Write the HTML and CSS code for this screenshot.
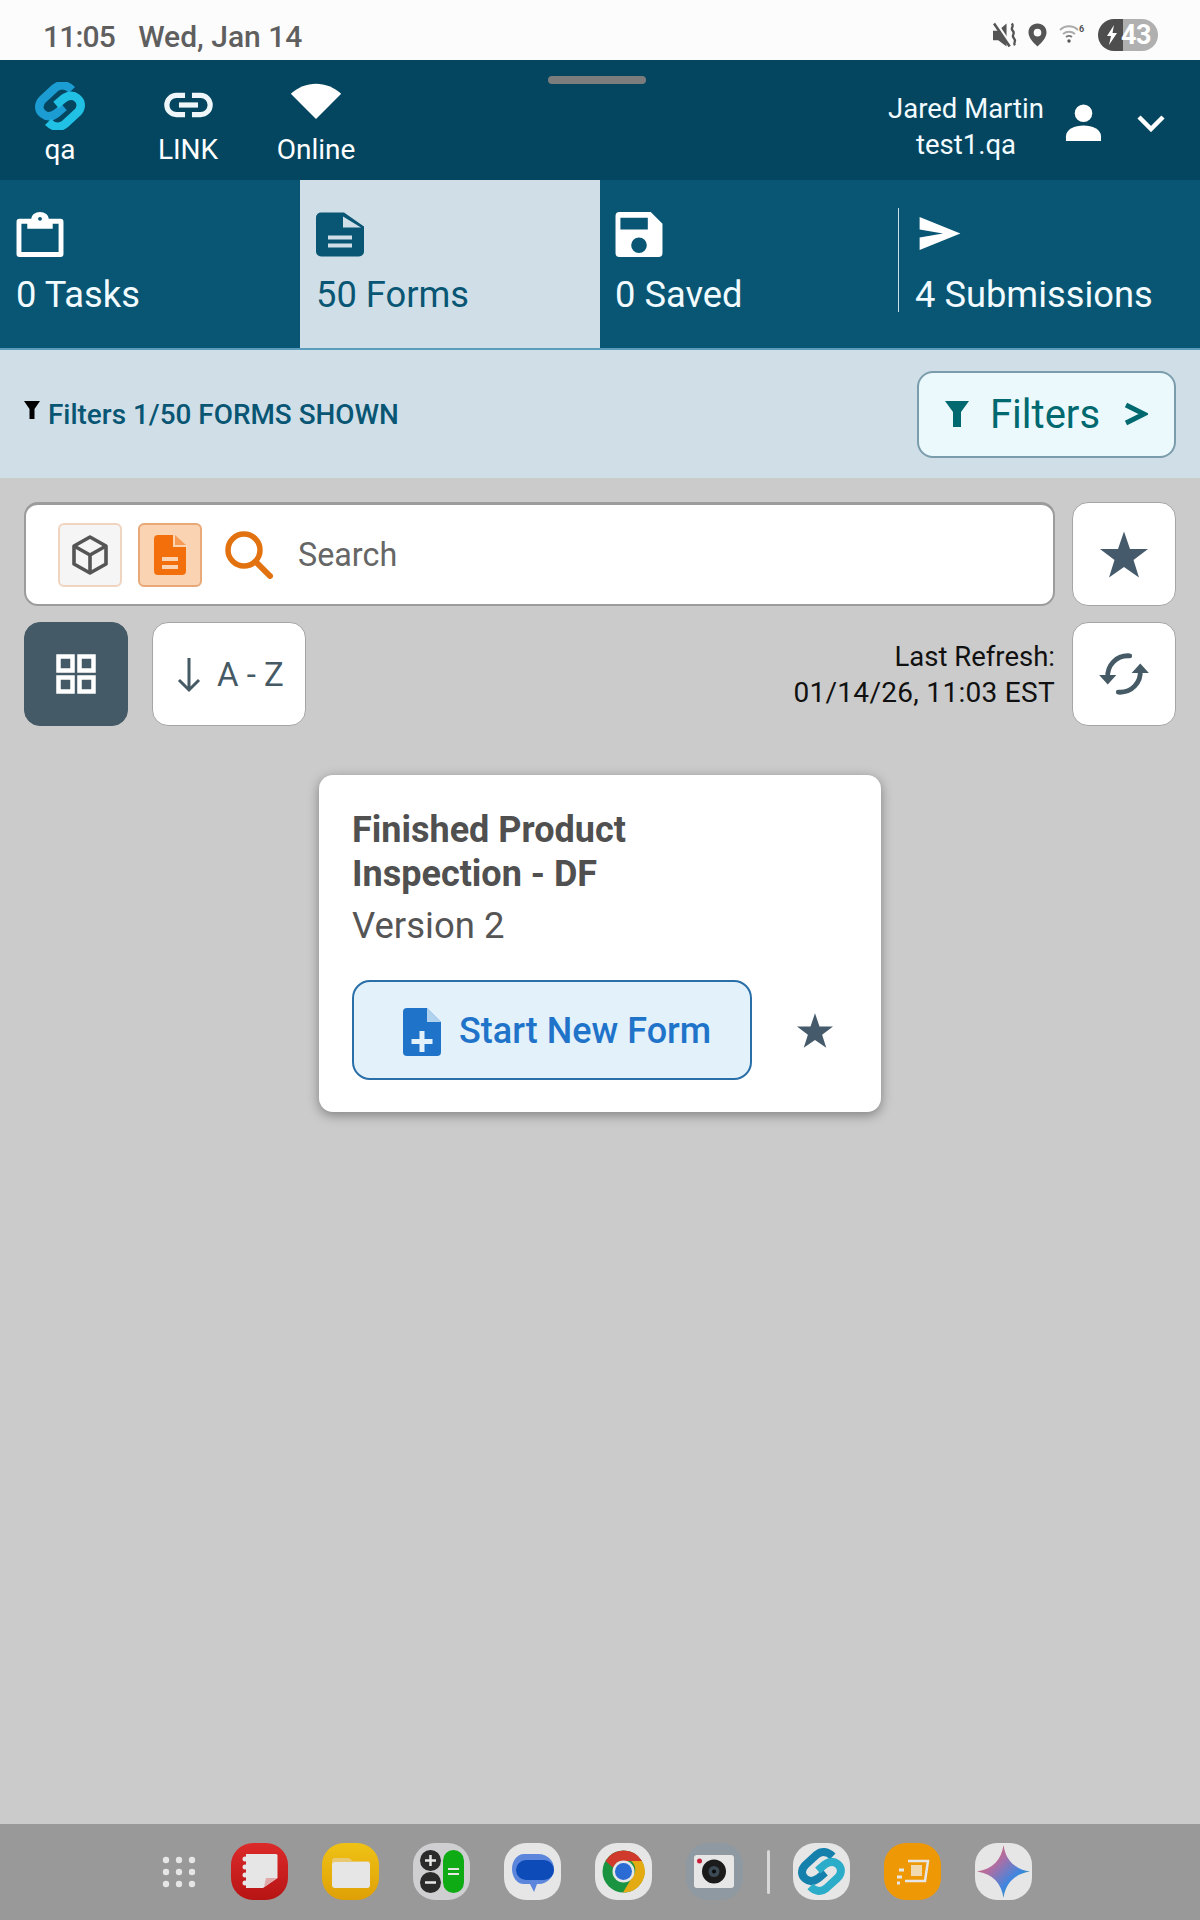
FILE: index.html
```html
<!DOCTYPE html>
<html lang="en">
<head>
<meta charset="utf-8">
<title>Forms</title>
<link rel="stylesheet" href="styles.css">
</head>
<body>
<div class="page">
  <div class="status">
    <div class="status-text"><span class="clock">11:05</span><span>Wed, Jan 14</span></div>
    <div class="status-icons">
      <svg class="si-mute" viewBox="0 0 24 24"><path fill="#555" d="M0 8h5l8-7v22l-8-6H0z"/><path stroke="#fcfcfc" stroke-width="2.500" d="M3 0l13 20"/><path stroke="#555" stroke-width="2.500" d="M1 1l15 22"/><path fill="none" stroke="#555" stroke-width="2.200" d="M18 1c3 3-2 4 1 7s-2 4 1 7-1 4 1 7"/></svg>
      <svg class="si-loc" viewBox="0 0 20 24"><path fill="#555" fill-rule="evenodd" d="M10 0c5.500 0 9.500 4 9.500 9.300 0 5-4.500 10.200-9.500 14.700C5 19.500.5 14.300.5 9.300.5 4 4.500 0 10 0zm0 5.500a4 4 0 1 0 0 8 4 4 0 0 0 0-8z"/></svg>
      <svg class="si-wifi" viewBox="0 0 27 20"><g fill="none" stroke="#aaa" stroke-width="1.800"><path d="M1 7c5-5 13-5 18 0"/><path d="M4 11c3.500-3 8.500-3 12 0"/></g><path fill="none" stroke="#777" stroke-width="1.800" d="M7 14c2-1.500 4-1.500 6 0"/><circle cx="10" cy="18" r="1.700" fill="#555"/><text x="20" y="9" class="si-six">6</text></svg>
      <div class="battery">
        <div class="bat-charge"><svg class="bat-bolt" viewBox="0 0 12 20"><path fill="#fff" d="M8 0L1 11h4l-2 9 8-12H6.500z"/></svg></div>
        <div class="bat-level">43</div>
      </div>
    </div>
  </div>

  <header class="topbar">
    <div class="handle"></div>
    <div class="top-left">
      <div class="top-item">
        <svg class="logo" viewBox="0 0 48 48"><g fill="none" stroke-width="8.500"><path stroke="#1b9dd3" d="M36 8C30 2 24 2 19 6L7 17C2 22 2 28 7 32c5 4 10 2 14-1l7-6"/><path stroke="#21c0e5" d="M12 40c6 6 12 6 17 2l12-11c5-5 5-11 0-15-5-4-10-2-14 1l-7 6"/></g></svg>
        <span>qa</span>
      </div>
      <div class="top-item">
        <svg class="link" viewBox="0 0 56 30"><g fill="none" stroke="#eef6fa" stroke-width="6"><path d="M24 4H14a11 11 0 0 0 0 22h10"/><path d="M32 4h10a11 11 0 0 1 0 22H32"/><path d="M17 15h22"/></g></svg>
        <span>LINK</span>
      </div>
      <div class="top-item">
        <svg class="wifi" viewBox="0 0 56 40"><path fill="#fff" d="M0 12C16-3 40-3 56 12L28 40z"/></svg>
        <span>Online</span>
      </div>
    </div>
    <div class="top-right">
      <div class="user"><span>Jared Martin</span><span>test1.qa</span></div>
      <svg class="person" viewBox="0 0 36 38"><circle cx="18" cy="9.500" r="9" fill="#fff"/><path fill="#fff" d="M0 38v-5c0-7 9-11 18-11s18 4 18 11v5z"/></svg>
      <svg class="chev" viewBox="0 0 28 18"><path fill="none" stroke="#fff" stroke-width="4.500" d="M2 3l12 12L26 3"/></svg>
    </div>
  </header>

  <nav class="tabs">
    <div class="tab">
      <svg class="tab-icon" viewBox="0 0 48 46"><path fill="#fff" fill-rule="evenodd" d="M3 7h12a9 7 0 0 1 18 0h12a3 3 0 0 1 3 3v33a3 3 0 0 1-3 3H3a3 3 0 0 1-3-3V10a3 3 0 0 1 3-3zm2 5v29h38V12h-6v5H11v-5zM24 5a2 2 0 1 0 0 4 2 2 0 0 0 0-4z"/></svg>
      <span>0 Tasks</span>
    </div>
    <div class="tab active">
      <svg class="tab-icon" viewBox="0 0 48 44"><path fill="#085674" d="M5 0h23l20 14v25a5 5 0 0 1-5 5H5a5 5 0 0 1-5-5V5a5 5 0 0 1 5-5z"/><path fill="#d0dfe7" d="M27 4l18 11H27zM12 23h24v4H12zM12 31h24v4H12z"/></svg>
      <span>50 Forms</span>
    </div>
    <div class="tab saved">
      <svg class="tab-icon" viewBox="0 0 48 46"><path fill="#fff" fill-rule="evenodd" d="M4 0h32l12 12v30a4 4 0 0 1-4 4H4a4 4 0 0 1-4-4V4a4 4 0 0 1 4-4zm1 6v12h28V6zm19 20a8 8 0 1 0 0 16 8 8 0 0 0 0-16z"/></svg>
      <span>0 Saved</span>
    </div>
    <div class="tab last">
      <svg class="tab-icon send" viewBox="0 0 42 34"><path fill="#fff" d="M0 0l42 17L0 34v-13l24-4-24-4z"/></svg>
      <span>4 Submissions</span>
    </div>
  </nav>

  <section class="filterbar">
    <div class="filter-note">
      <svg class="funnel-sm" viewBox="0 0 16 18"><path fill="#000" d="M0 0h16l-5.500 8v10h-5V8z"/></svg>
      <span>Filters 1/50 FORMS SHOWN</span>
    </div>
    <button class="filter-btn">
      <svg class="funnel" viewBox="0 0 24 26"><path fill="#00696f" d="M0 0h24l-8 11v15H8V11z"/></svg>
      <span>Filters</span>
      <svg class="gt" viewBox="0 0 24 24"><path fill="none" stroke="#00696f" stroke-width="5" d="M2 3l18 9L2 21"/></svg>
    </button>
  </section>

  <main class="content">
    <div class="row">
      <div class="search">
        <div class="mode mode-off">
          <svg class="cube" viewBox="0 0 36 40"><g fill="none" stroke="#555" stroke-width="3.600" stroke-linejoin="round"><path d="M18 2l16 9v18l-16 9-16-9V11z"/><path d="M2 11l16 9 16-9M18 20v18"/></g></svg>
        </div>
        <div class="mode mode-on">
          <svg class="doc" viewBox="0 0 32 40"><path fill="#f36f0b" d="M4 0h15v12h13v24a4 4 0 0 1-4 4H4a4 4 0 0 1-4-4V4a4 4 0 0 1 4-4z"/><path fill="#f36f0b" d="M21 0l11 10H21z" opacity=".55"/><path fill="#fbd3b2" d="M8 22h16v4H8zM8 30h16v4H8z"/></svg>
        </div>
        <svg class="mag" viewBox="0 0 48 48"><circle cx="19" cy="19" r="16" fill="none" stroke="#e2720f" stroke-width="5.500"/><path stroke="#e2720f" stroke-width="6" stroke-linecap="round" d="M31 31l14 14"/></svg>
        <span class="placeholder">Search</span>
      </div>
      <button class="square">
        <svg class="star-lg" viewBox="0 0 48 46"><path fill="#455a6b" d="M24 0l6 17.500h18L33.500 28.500 39 46 24 35.500 9 46l5.500-17.500L0 17.500h18z"/></svg>
      </button>
    </div>
    <div class="row">
      <button class="square grid-btn">
        <svg class="grid" viewBox="0 0 40 40"><g fill="none" stroke="#fff" stroke-width="4.500"><path d="M2.500 2.500h14v14h-14zM23.500 2.500h14v14h-14zM2.500 23.500h14v14h-14zM23.500 23.500h14v14h-14z"/></g></svg>
      </button>
      <button class="sort">
        <svg class="arrow" viewBox="0 0 24 36"><path fill="none" stroke="#455a64" stroke-width="3" d="M12 1v32M2 23l10 10 10-10"/></svg>
        <span>A - Z</span>
      </button>
      <div class="refresh-text"><span>Last Refresh:</span><span class="refresh-date">01/14/26, 11:03 EST</span></div>
      <button class="square">
        <svg class="sync" viewBox="0 0 52 46"><g fill="none" stroke="#455a64" stroke-width="5" stroke-linecap="round"><path d="M9 27C8 14 18 3 32 4"/><path d="M43 19c1 13-9 24-23 23"/></g><path fill="#455a64" d="M0 24h18l-9 10zM34 22h18l-9-10z"/></svg>
      </button>
    </div>

    <article class="card">
      <h2 class="card-title">Finished Product<br>Inspection - DF</h2>
      <p class="card-version">Version 2</p>
      <div class="card-actions">
        <button class="start">
          <svg class="doc-plus" viewBox="0 0 38 48"><path fill="#1f74ca" d="M4 0h20l14 14v30a4 4 0 0 1-4 4H4a4 4 0 0 1-4-4V4a4 4 0 0 1 4-4z"/><path fill="#e3f1fb" d="M24 0v14h14z" opacity=".75"/><path fill="#e3f1fb" d="M16.500 23h5v8h8v5h-8v8h-5v-8h-8v-5h8z"/></svg>
          <span>Start New Form</span>
        </button>
        <svg class="star-sm" viewBox="0 0 48 46"><path fill="#455a6b" d="M24 0l6 17.500h18L33.500 28.500 39 46 24 35.500 9 46l5.500-17.500L0 17.500h18z"/></svg>
      </div>
    </article>
  </main>

  <footer class="dock">
    <svg class="dock-grid" viewBox="0 0 36 32"><g fill="#e6e6e6"><circle cx="5" cy="4" r="3.200"/><circle cx="18" cy="4" r="3.200"/><circle cx="31" cy="4" r="3.200"/><circle cx="5" cy="16" r="3.200"/><circle cx="18" cy="16" r="3.200"/><circle cx="31" cy="16" r="3.200"/><circle cx="5" cy="28" r="3.200"/><circle cx="18" cy="28" r="3.200"/><circle cx="31" cy="28" r="3.200"/></g></svg>

    <div class="app app-notes"><svg class="app-svg" viewBox="0 0 57 57"><path fill="#e6e6e6" d="M15 11h30a1.500 1.500 0 0 1 1.500 1.500V35L32 45H15z"/><path fill="#e0a8a8" d="M33 44l2-9h11z"/><g fill="#e6e6e6"><circle cx="14" cy="16" r="2.500"/><circle cx="14" cy="24" r="2.500"/><circle cx="14" cy="32" r="2.500"/><circle cx="14" cy="40" r="2.500"/></g></svg></div>
    <div class="app app-files"><svg class="app-svg" viewBox="0 0 57 57"><path fill="#e8c870" d="M10 18a3 3 0 0 1 3-3h14l4 3h15a2 2 0 0 1 2 2v4H10z"/><rect x="10" y="19" width="38" height="26" rx="3" fill="#e6e6e6"/></svg></div>
    <div class="app app-calc"><svg class="app-svg" viewBox="0 0 57 57"><rect x="30" y="7" width="21" height="43" rx="10.500" fill="#0eab14"/><circle cx="17.500" cy="17.500" r="10.500" fill="#2a2a2a"/><circle cx="17.500" cy="39.500" r="10.500" fill="#2a2a2a"/><path stroke="#e6e6e6" stroke-width="2.500" d="M12 17.500h11M17.500 12v11M12 39.500h11"/><path stroke="#e6e6e6" stroke-width="2.200" d="M35 26h11M35 31h11"/></svg></div>
    <div class="app app-light"><svg class="app-svg" viewBox="0 0 57 57"><path fill="#5c86dc" d="M20 11h14c10 0 16 7 16 15s-7 15-15 15h-2l-3 8-4-8h-6C12 41 8 33 8 26c0-8 5-15 12-15z"/><rect x="12" y="17" width="38" height="20" rx="10" fill="#0c4bb8"/></svg></div>
    <div class="app app-light"><svg class="app-svg" viewBox="0 0 57 57"><circle cx="28.500" cy="28.500" r="21" fill="#1a9440"/><path fill="#cf3a2c" d="M10.500 18A21 21 0 0 1 47 18H28.500a10.500 10.500 0 0 0-10 7z"/><path fill="#e3aa12" d="M47 18a21 21 0 0 1-19 31.500l9.500-16A10.500 10.500 0 0 0 36 18z"/><circle cx="28.500" cy="28.500" r="11" fill="#e6e6e6"/><circle cx="28.500" cy="28.500" r="8.500" fill="#2a6bd4"/></svg></div>
    <div class="app app-cam"><svg class="app-svg" viewBox="0 0 57 57"><rect x="8" y="12" width="40" height="33" rx="3" fill="#e6e6e6"/><circle cx="28" cy="28.500" r="12" fill="#1b1b1b"/><circle cx="28" cy="28.500" r="5.500" fill="#3c4a55"/><circle cx="28" cy="28.500" r="2" fill="#0b0b0b"/><circle cx="13.500" cy="18" r="2.500" fill="#c8203a"/></svg></div>
    <div class="dock-sep"></div>
    <div class="app app-light"><svg class="app-svg" viewBox="0 0 48 48"><g transform="translate(5 5) scale(.79)" fill="none" stroke-width="8.500"><path stroke="#1680ad" d="M36 8C30 2 24 2 19 6L7 17C2 22 2 28 7 32c5 4 10 2 14-1l7-6"/><path stroke="#2badca" d="M12 40c6 6 12 6 17 2l12-11c5-5 5-11 0-15-5-4-10-2-14 1l-7 6"/></g></svg></div>
    <div class="app app-orange"><svg class="app-svg" viewBox="0 0 57 57"><path fill="none" stroke="#e6e6e6" stroke-width="2.500" d="M24 18h20l-3 20H21"/><rect x="27" y="22" width="11" height="11" fill="#f1d9b0"/><path stroke="#e6e6e6" stroke-width="3" d="M15 27h5M13 34h5M13 40h3"/></svg></div>
    <div class="app app-light"><svg class="app-svg" viewBox="0 0 57 57"><defs><linearGradient id="gem" x1="0" y1="0" x2="1" y2="1"><stop offset="0" stop-color="#cf5a50"/><stop offset=".35" stop-color="#b46da0"/><stop offset=".65" stop-color="#3f86e0"/><stop offset="1" stop-color="#2fa86a"/></linearGradient></defs><path fill="url(#gem)" d="M28.500 2c2 15 11 24 26.500 26.500C39.500 31 30.500 40 28.500 55 26.500 40 17.500 31 2 28.500 17.500 26 26.500 17 28.500 2z"/></svg></div>
  </footer>
</div>
</body>
</html>
```
FILE: styles.css
```css
* { box-sizing: border-box; }
html, body { margin: 0; padding: 0; }
body { font-family: Roboto, "Liberation Sans", sans-serif; }
svg { display: block; flex: none; }
button { font-family: inherit; margin: 0; cursor: pointer; }
.page { width: 1200px; height: 1920px; display: flex; flex-direction: column; overflow: hidden; background: #cbcbcb; }

/* status bar */
.status { height: 60px; flex: none; background: #fcfcfc; display: flex; align-items: center; justify-content: space-between; padding: 0 42px 0 43px; }
.status-text { display: flex; gap: 23px; font-size: 30px; font-weight: 500; color: #5f5f5f; padding-top: 12px; }
.clock { letter-spacing: -.8px; }
.status-icons { display: flex; align-items: center; height: 60px; padding-top: 10px; }
.si-mute { width: 25px; height: 26px; }
.si-loc { width: 19px; height: 24px; margin-left: 10px; }
.si-wifi { width: 27px; height: 20px; margin-left: 12px; margin-top: -4px; }
.si-six { font-size: 9px; font-weight: 700; fill: #555; }
.battery { display: flex; width: 60px; height: 32px; margin-left: 12px; border-radius: 16px; overflow: hidden; }
.bat-charge { width: 25px; background: #4e4e4e; display: flex; align-items: center; justify-content: center; padding-left: 3px; }
.bat-bolt { width: 12px; height: 20px; }
.bat-level { flex: 1; background: #b0b0b0; color: #fff; font-size: 27px; font-weight: 700; line-height: 32px; text-indent: -2px; letter-spacing: -.5px; }

/* header */
.topbar { position: relative; height: 120px; flex: none; background: #04465f; display: flex; justify-content: space-between; color: #fff; padding: 0 35px 0 0; }
.handle { position: absolute; left: 548px; top: 16px; width: 98px; height: 8px; border-radius: 4px; background: #7c7c7c; }
.top-left { display: flex; }
.top-item { width: 128px; display: flex; flex-direction: column; align-items: center; height: 120px; padding-top: 22px; font-size: 28px; line-height: 32px; }
.top-item span { margin-top: auto; padding-bottom: 14px; }
.top-left .top-item:first-child { width: 120px; margin-right: 4px; }
.logo { width: 50px; height: 48px; }
.link { width: 59px; height: 26px; margin-top: 10px; }
.wifi { width: 56px; height: 36px; margin-top: 1px; }
.top-right { display: flex; align-items: center; }
.user { display: flex; flex-direction: column; align-items: center; font-size: 27.500px; line-height: 36px; color: #f2fbff; padding-top: 14px; width: 170px; }
.person { width: 37px; height: 37px; margin-left: 14px; margin-top: 4px; }
.chev { width: 28px; height: 18px; margin-left: 35px; margin-top: 6px; }

/* tabs */
.tabs { height: 170px; flex: none; display: grid; grid-template-columns: repeat(4, 300px); background: #085674; border-bottom: 2px solid #5b9dbd; color: #f2fbff; }
.tab { display: flex; flex-direction: column; padding: 32px 0 0 16px; font-size: 36.300px; line-height: 44px; }
.tab span { margin-top: 16px; }
.tab-icon { width: 48px; height: 45px; }
.tab.active { background: #d0dfe7; color: #085674; padding-left: 16px; }
.tab.saved { padding-left: 15px; }
.tab.last { position: relative; padding-left: 15px; }
.tab.last::before { content: ""; position: absolute; left: -2px; top: 28px; width: 1px; height: 104px; background: #cfe0ea; }
.tab-icon.send { width: 42px; height: 33px; margin: 5px 0 7px 4px; }

/* filter bar */
.filterbar { height: 128px; flex: none; background: #d0dfe7; display: flex; align-items: center; justify-content: space-between; padding: 0 24px 0 24px; }
.filter-note { display: flex; align-items: center; gap: 8px; font-size: 27.900px; font-weight: 500; color: #085674; }
.funnel-sm { width: 16px; height: 18px; margin-top: -9px; }
.filter-btn { width: 259px; height: 87px; border: 2px solid #7b9cab; border-radius: 16px; background: #ebf9fd; display: flex; align-items: center; padding: 0 0 0 26px; color: #00696f; font-size: 40px; }
.funnel { width: 24px; height: 26px; }
.filter-btn span { margin-left: 21px; }
.gt { width: 24px; height: 24px; margin-left: 24px; }

/* content */
.content { flex: 1; display: flex; flex-direction: column; padding: 24px 24px 0; gap: 16px; background: #cbcbcb; }
.row { display: flex; align-items: stretch; height: 104px; flex: none; }
.search { flex: 1; display: flex; align-items: center; background: #fff; border: 2px solid #9c9c9c; border-top-width: 3px; border-radius: 14px; padding-left: 32px; margin-right: 17px; }
.mode { width: 64px; height: 64px; border-radius: 6px; display: flex; align-items: center; justify-content: center; }
.mode-off { background: #f5f5f5; border: 2px solid #f0d4bf; }
.mode-on { background: #fad3b3; border: 2px solid #e8a877; margin-left: 16px; }
.cube { width: 36px; height: 40px; }
.doc { width: 32px; height: 40px; }
.mag { width: 48px; height: 48px; margin-left: 23px; }
.placeholder { font-size: 32.300px; color: #666; margin-left: 25px; }
.square { width: 104px; height: 104px; flex: none; background: #fff; border: 1px solid #a5a5a5; border-radius: 16px; display: flex; align-items: center; justify-content: center; padding: 0; }
.star-lg { width: 48px; height: 47px; }
.grid-btn { background: #455a67; border-color: #455a67; }
.grid { width: 40px; height: 40px; }
.sort { width: 154px; margin-left: 24px; background: #fff; border: 1px solid #a5a5a5; border-radius: 16px; display: flex; align-items: center; padding: 0 0 0 24px; font-size: 33px; color: #455a64; }
.sort span { margin-left: 16px; }
.arrow { width: 24px; height: 36px; margin-top: 2px; }
.refresh-text { flex: 1; display: flex; flex-direction: column; align-items: flex-end; justify-content: center; font-size: 27.500px; line-height: 36px; color: #111; margin-right: 17px; padding-top: 2px; }
.refresh-date { font-size: 28px; letter-spacing: .3px; }
.sync { width: 50px; height: 44px; }

/* card */
.card { align-self: center; width: 562px; height: 337px; margin-top: 33px; background: #fff; border-radius: 14px; box-shadow: 0 3px 12px rgba(0,0,0,.38); padding: 33px 33px 0; color: #4f4f4f; }
.card-title { margin: 0; font-size: 36px; line-height: 44px; font-weight: 700; color: #505050; }
.card-version { margin: 8px 0 0; font-size: 36.500px; line-height: 44px; font-weight: 400; color: #555; }
.card-actions { display: flex; align-items: center; margin-top: 32px; }
.start { width: 400px; height: 100px; background: #e3f1fb; border: 2px solid #2a6fa8; border-radius: 18px; display: flex; align-items: center; padding: 0 0 0 49px; font-size: 36px; font-weight: 500; color: #1f74ca; }
.start span { margin-left: 18px; padding-top: 1px; }
.doc-plus { width: 38px; height: 48px; margin-top: 3px; }
.star-sm { width: 36px; height: 35px; margin-left: 45px; }

/* dock */
.dock { height: 96px; flex: none; background: #999; display: flex; align-items: center; padding-left: 161px; padding-bottom: 1px; }
.dock-grid { width: 36px; height: 32px; margin-right: 34px; }
.app { width: 57px; height: 57px; border-radius: 22px; margin-right: 34px; overflow: hidden; }
.app-svg { width: 57px; height: 57px; }
.app-notes { background: linear-gradient(#dc2a2a, #b71414); }
.app-files { background: linear-gradient(#efc215, #dfa006); }
.app-calc { background: #cfcfd2; }
.app-light { background: #e6e6e6; }
.app-cam { background: #8e99a2; margin-right: 24px; }
.app-orange { background: #ee9806; }
.dock-sep { width: 3px; height: 44px; background: #d8d8d8; border-radius: 2px; margin-right: 23px; }
```
